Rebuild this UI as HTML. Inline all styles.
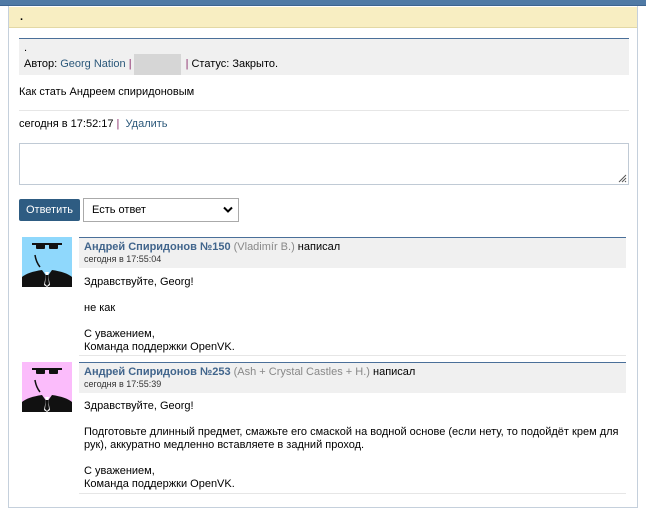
<!DOCTYPE html>
<html><head><meta charset="utf-8"><style>
*{box-sizing:border-box}
body{margin:0;width:646px;height:515px;background:#fff;font-family:Tahoma,"Liberation Sans","DejaVu Sans",sans-serif;font-size:11px;color:#000;position:relative;overflow:hidden}
.abs{position:absolute}
a{color:#2B587A;text-decoration:none}
.topbar{left:0;top:0;width:646px;height:6px;background:#507aa5;border-bottom:1px solid #3d6591}
.cont{left:8px;top:6px;width:630px;height:502px;border:1px solid #c5d0dc;border-top:none}
.yel{left:9px;top:7px;width:628px;height:21px;background:#f8eec2;border-bottom:1px solid #e3d8a5}
.gbox{left:19px;top:38px;width:610px;height:37px;background:#f0f0f0;border-top:1px solid #4a6f99}
.sep{color:#8a2b6a}
.ta{left:19px;top:143px;width:610px;height:42px;border:1px solid #c0cad5}
.btn{left:19px;top:199px;width:61px;height:22px;background:#2e5c82;color:#fff;border-radius:2px;text-align:center;line-height:22px;font-size:11px}
.sel{left:83px;top:198px;width:156px;height:24px;border:1px solid #aaa;padding-left:8px;line-height:22px}
.hdr{left:79px;width:547px;height:31px;background:#f0f0f0;border-top:1px solid #4a6f99;padding:3px 0 0 5px}
.nm{font-weight:bold;color:#41658c}
.gr{color:#888}
.dt{font-size:9px;color:#333;margin-top:1px}
.body{left:84px;line-height:13px}
.ln{left:79px;width:547px;height:1px;background:#e6e6e6}
</style></head><body>
<div class="abs topbar"></div>
<div class="abs cont"></div>
<div class="abs yel"></div>
<div class="abs" style="left:20px;top:11px;font-weight:bold">.</div>
<div class="abs gbox"></div>
<div class="abs" style="left:134px;top:54px;width:47px;height:21px;background:#d6d6d6"></div>
<div class="abs" style="left:24px;top:42px">.</div>
<div class="abs" style="left:24px;top:58px;white-space:nowrap">Автор: <a>Georg Nation</a> <span class="sep">|</span><span style="display:inline-block;width:54px"></span><span class="sep">|</span> Статус: Закрыто.</div>
<div class="abs" style="left:19px;top:86px">Как стать Андреем спиридоновым</div>
<div class="abs" style="left:19px;top:110px;width:610px;height:1px;background:#e6e6e6"></div>
<div class="abs" style="left:19px;top:118px">сегодня в 17:52:17 <span class="sep">|</span> &nbsp;<a>Удалить</a></div>
<div class="abs ta"><svg class="abs" style="right:1px;bottom:1px" width="9" height="9"><path d="M8 1L1 8M8 4L4 8M8 7L7 8" stroke="#555" stroke-width="1"/></svg></div>
<div class="abs btn">Ответить</div>
<div class="abs sel">Есть ответ<svg class="abs" style="right:5px;top:7px" width="10" height="8"><path d="M1 1.5L5 5.5L9 1.5" stroke="#000" stroke-width="2" fill="none"/></svg></div>

<svg class="abs" style="left:22px;top:237px" width="50" height="50"><rect width="50" height="50" fill="#8fd8fc"/><path d="M0 50V40Q6 35 20 33L25 40L30 33Q44 35 50 40V50Z" fill="#111"/><path d="M23 35L27 35L26 38L28 48L25 50L22 48L24 38Z" fill="#fff"/><path d="M24 38L26 38L27 47L25 49L23 47Z" fill="#111"/><rect x="10" y="6" width="30" height="2" fill="#111"/><rect x="14" y="7" width="9" height="5" rx="1" fill="#111"/><rect x="27" y="7" width="9" height="5" rx="1" fill="#111"/><path d="M13 18Q14 25 18 30" stroke="#111" stroke-width="1.5" fill="none"/></svg>
<div class="abs hdr" style="top:237px"><span class="nm">Андрей Спиридонов №150</span> <span class="gr">(Vladimír B.)</span> написал<div class="dt">сегодня в 17:55:04</div></div>
<div class="abs body" style="top:276px">Здравствуйте, Georg!<br><br>не как<br><br>С уважением,<br>Команда поддержки OpenVK.</div>
<div class="abs ln" style="top:355px"></div>

<svg class="abs" style="left:22px;top:362px" width="50" height="50"><rect width="50" height="50" fill="#fbbcfb"/><path d="M0 50V40Q6 35 20 33L25 40L30 33Q44 35 50 40V50Z" fill="#111"/><path d="M23 35L27 35L26 38L28 48L25 50L22 48L24 38Z" fill="#fff"/><path d="M24 38L26 38L27 47L25 49L23 47Z" fill="#111"/><rect x="10" y="6" width="30" height="2" fill="#111"/><rect x="14" y="7" width="9" height="5" rx="1" fill="#111"/><rect x="27" y="7" width="9" height="5" rx="1" fill="#111"/><path d="M13 18Q14 25 18 30" stroke="#111" stroke-width="1.5" fill="none"/></svg>
<div class="abs hdr" style="top:362px"><span class="nm">Андрей Спиридонов №253</span> <span class="gr">(Ash + Crystal Castles + H.)</span> написал<div class="dt">сегодня в 17:55:39</div></div>
<div class="abs body" style="top:400px;width:545px">Здравствуйте, Georg!<br><br>Подготовьте длинный предмет, смажьте его смаской на водной основе (если нету, то подойдёт крем для рук), аккуратно медленно вставляете в задний проход.<br><br>С уважением,<br>Команда поддержки OpenVK.</div>
<div class="abs ln" style="top:493px"></div>
</body></html>
